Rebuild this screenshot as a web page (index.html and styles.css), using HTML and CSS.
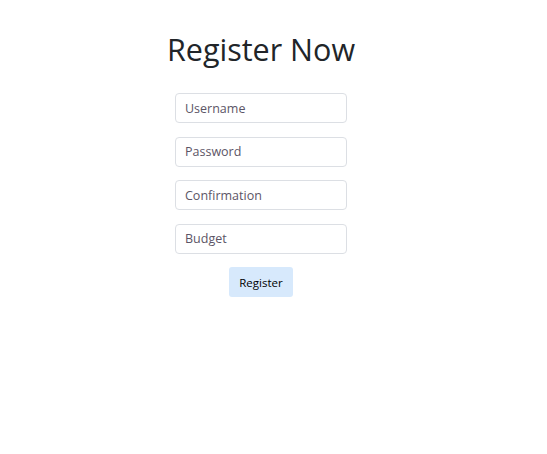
FILE: index.html
```html
<html>
	<head>
		<link rel="stylesheet" href="styles.css">
	</head>
	<body>
		<div class="wrap">
			<h1 class="title">Register Now</h1>
			<form class="regForm">
				<input class="field" type="text" placeholder="Username">
				<input class="field" type="password" placeholder="Password">
				<input class="field" type="password" placeholder="Confirmation">
				<input class="field" type="text" placeholder="Budget">
				<button class="btnReg" type="button">Register</button>
			</form>
		</div>
	</body>
</html>
```

FILE: styles.css
```css
body {
	margin: 0;
	font-family: "Open Sans", "Noto Sans", sans-serif;
	color: #212529;
	background: #ffffff;
}
.wrap {
	width: 522px;
	display: flex;
	flex-direction: column;
	align-items: center;
}
.title {
	margin: 29px 0 24px 0;
	font-size: 30.5px;
	font-weight: 400;
	line-height: 40px;
}
.regForm {
	display: flex;
	flex-direction: column;
	align-items: center;
	gap: 13.5px;
	margin: 0;
}
.field {
	box-sizing: border-box;
	width: 172px;
	height: 30px;
	padding: 0 9px;
	border: 1px solid #dcdfe4;
	border-radius: 4px;
	font-family: "Open Sans", "Noto Sans", sans-serif;
	font-size: 12.5px;
	color: #495057;
}
.field::placeholder {
	color: #5c5566;
}
.btnReg {
	box-sizing: border-box;
	width: 64px;
	height: 30px;
	margin-top: 0;
	border: none;
	border-radius: 3px;
	background: #d7e9fc;
	font-family: "Open Sans", "Noto Sans", sans-serif;
	font-size: 11.5px;
	color: #000000;
}
```
